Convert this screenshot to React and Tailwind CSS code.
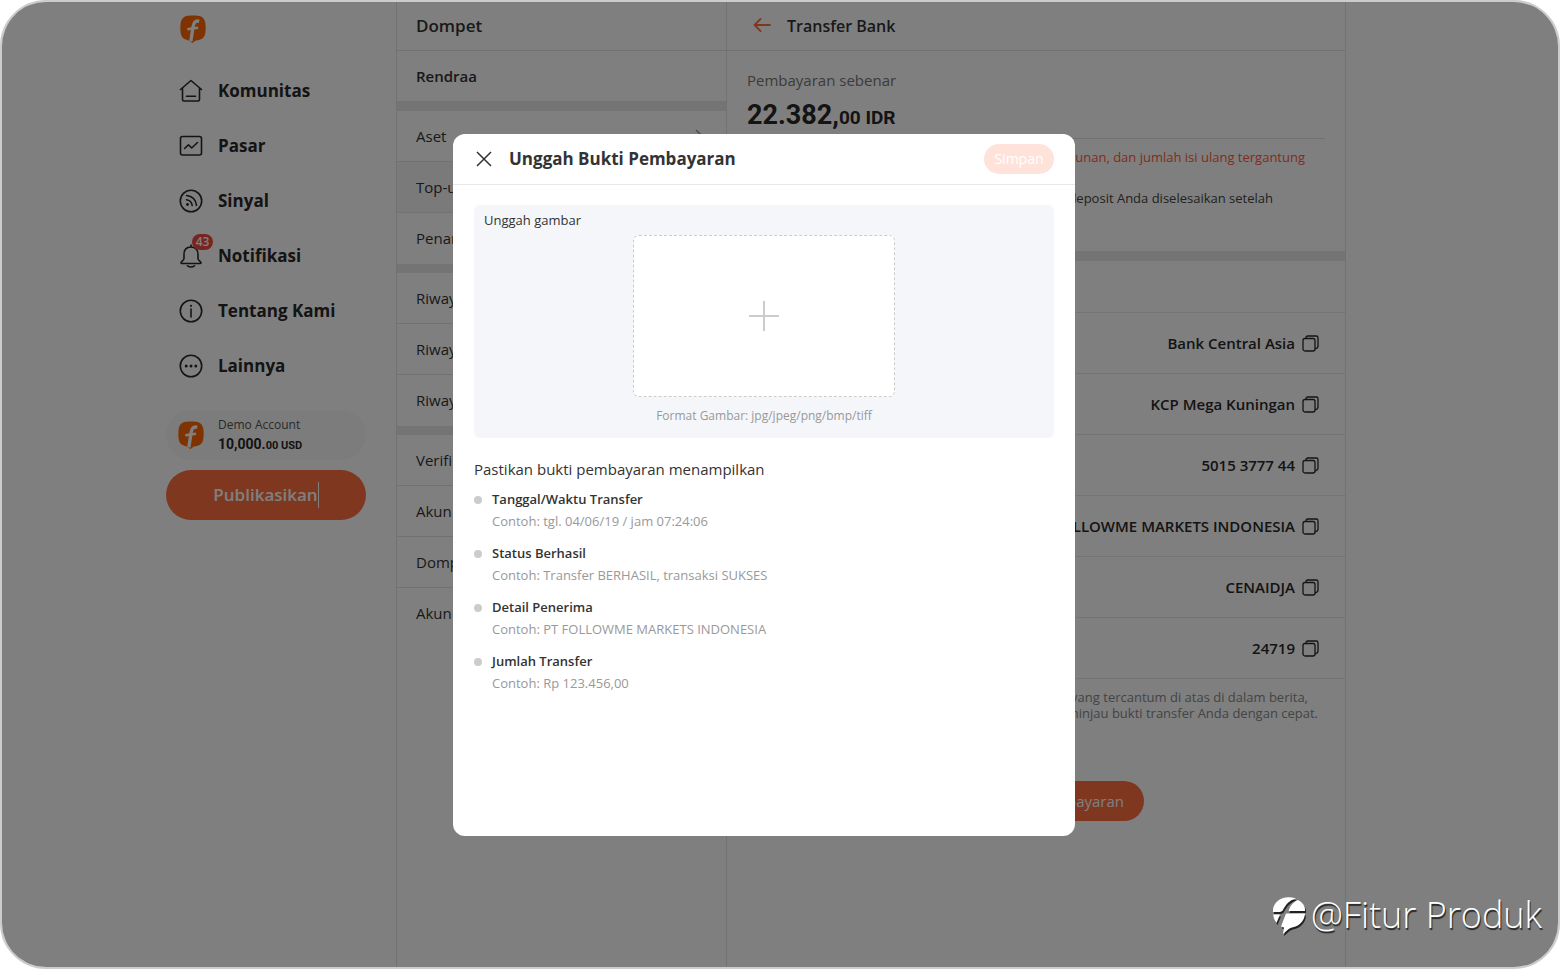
import React from "react";

const navItems = [
  { label: "Komunitas", icon: "home" },
  { label: "Pasar", icon: "market" },
  { label: "Sinyal", icon: "signal" },
  { label: "Notifikasi", icon: "bell", badge: 43 },
  { label: "Tentang Kami", icon: "info" },
  { label: "Lainnya", icon: "more" },
];

const walletGroups = [
  [{ label: "Aset", arrow: true }, { label: "Top-up", active: true }, { label: "Penarikan" }],
  [{ label: "Riwayat Aset" }, { label: "Riwayat Top-up" }, { label: "Riwayat Tarik" }],
  [{ label: "Verifikasi" }, { label: "Akun Bank" }, { label: "Dompet" }, { label: "Akun Saya" }],
];

const bankRows = [
  ["Nama Bank", "Bank Central Asia"],
  ["Cabang", "KCP Mega Kuningan"],
  ["Nomor Rekening", "5015 3777 44"],
  ["Nama Penerima", "PT FOLLOWME MARKETS INDONESIA"],
  ["Kode Swift", "CENAIDJA"],
  ["Berita", "24719"],
];

const proofItems = [
  ["Tanggal/Waktu Transfer", "Contoh: tgl. 04/06/19 / jam 07:24:06"],
  ["Status Berhasil", "Contoh: Transfer BERHASIL, transaksi SUKSES"],
  ["Detail Penerima", "Contoh: PT FOLLOWME MARKETS INDONESIA"],
  ["Jumlah Transfer", "Contoh: Rp 123.456,00"],
];

function Logo() {
  return (
    <svg className="h-7 w-[26px] shrink-0" viewBox="0 0 26 28" aria-hidden="true">
      <path
        d="M8 .8C10.500 .3 15.500 .3 18 .8C22.500 1.600 24.600 3.800 25.300 8C25.800 11 25.800 15 25.300 18C24.600 22.300 22.400 24.300 18 25.200L15.800 25.500L12.500 28L8 25.200C3.600 24.300 1.400 22.300 .7 18C.2 15 .2 11 .7 8C1.400 3.800 3.500 1.600 8 .8Z"
        fill="#ff6600"
      />
      <path d="M19.200 6.300C14.800 5.200 13.700 8 13 12L10.800 26.500" fill="none" stroke="#fff" strokeWidth="3.400" />
      <path d="M7.400 14.400C11 13.200 14.500 13.500 18 12.800" fill="none" stroke="#fff" strokeWidth="2.600" />
    </svg>
  );
}

function NavIcon({ name }) {
  const shapes = {
    home: (
      <>
        <path d="M1.500 10.500L12 1.500L22.500 10.500M3.500 9.500V20.500Q3.500 22 5 22H19Q20.500 22 20.500 20.500V9.500" />
        <path d="M7.500 17.300H16.500" />
      </>
    ),
    market: (
      <>
        <rect x="1.500" y="2.500" width="21" height="18.500" rx="2" />
        <path d="M5.500 14.500L9.500 10.800L12.700 14L18.500 8.500" />
      </>
    ),
    signal: (
      <>
        <circle cx="12" cy="12" r="10.700" />
        <path d="M7.500 6.500Q16.500 7.500 17.500 16.500M7.500 10.800Q12.500 11.500 13.200 16.500" />
        <circle cx="8.500" cy="15.500" r="1.400" fill="currentColor" stroke="none" />
      </>
    ),
    bell: (
      <path d="M12 1V3M12 3C7.500 3 5 6 5 10.500V14.500C5 16.500 2 17.500 2 18.700Q2 19.500 3 19.500H21Q22 19.500 22 18.700C22 17.500 19 16.500 19 14.500V10.500C19 6 16.500 3 12 3ZM8.500 21.800Q12 24.200 15.500 21.800" />
    ),
    info: (
      <>
        <circle cx="12" cy="12" r="10.700" />
        <path d="M12 10V18" />
        <circle cx="12" cy="6.800" r="1.100" fill="currentColor" stroke="none" />
      </>
    ),
    more: (
      <>
        <circle cx="12" cy="12" r="10.700" />
        <g fill="currentColor" stroke="none">
          <circle cx="7.200" cy="12" r="1.500" />
          <circle cx="12" cy="12" r="1.500" />
          <circle cx="16.800" cy="12" r="1.500" />
        </g>
      </>
    ),
  };
  return (
    <svg className="h-6 w-6" viewBox="0 0 24 24" fill="none" stroke="currentColor" strokeWidth="1.600" strokeLinecap="round" strokeLinejoin="round" aria-hidden="true">
      {shapes[name]}
    </svg>
  );
}

function CopyIcon() {
  return (
    <svg className="h-[17px] w-[17px]" viewBox="0 0 17 17" fill="none" stroke="currentColor" strokeWidth="1.300" strokeLinejoin="round" aria-hidden="true">
      <rect x="1" y="3.500" width="12" height="12.500" rx="2" />
      <path d="M4 3.500V2.800Q4 1 5.800 1H14.200Q16 1 16 2.800V11Q16 13.300 13 13.800" />
    </svg>
  );
}

function Sidebar() {
  return (
    <aside className="flex justify-end border-r border-[#e4e4e4] pr-[30px]">
      <div className="flex w-[200px] flex-col">
        <a href="#beranda" aria-label="Beranda" className="ml-3.5 mt-[13px]">
          <Logo />
        </a>
        <nav className="mt-5 flex flex-col">
          {navItems.map((item) => (
            <a key={item.label} href={"#" + item.icon} className="flex h-[55px] items-center gap-[15px] pl-[13px] text-[17px] font-bold text-[#282828]">
              <span className="relative">
                <NavIcon name={item.icon} />
                {item.badge && (
                  <span className="absolute -top-2.5 left-[13px] flex h-4 w-[21px] items-center justify-center rounded-full bg-[#f04a42] text-[12px] font-semibold text-white">
                    {item.badge}
                  </span>
                )}
              </span>
              {item.label}
            </a>
          ))}
        </nav>
        <div className="mt-[17px] flex h-[50px] items-center gap-[14px] rounded-full bg-[#f8f8f8] pl-3">
          <Logo />
          <div>
            <p className="text-[12px] leading-5 text-[#555]">Demo Account</p>
            <p className="font-[Roboto] text-sm font-bold leading-[19px] text-[#282828]">
              10,000.<span className="text-[11px]">00 USD</span>
            </p>
          </div>
        </div>
        <button type="button" className="mt-2.5 flex h-[50px] items-center justify-center rounded-full bg-[#ff6f3f] text-[17px] font-semibold text-white">
          <span className="border-r border-white">Publikasikan</span>
        </button>
      </div>
    </aside>
  );
}

function WalletMenu() {
  return (
    <section className="border-r border-[#e4e4e4] text-[15px] text-[#333]">
      <h2 className="flex h-[49px] items-center border-b border-[#e0e0e0] px-[19px] text-[17px] font-semibold">Dompet</h2>
      <p className="flex h-[50px] items-center px-[19px] font-semibold">Rendraa</p>
      {walletGroups.map((group, i) => (
        <ul key={i} className={i === 0 ? "border-t-[10px] border-[#e9e9e9]" : "border-t-[9px] border-[#e9e9e9]"}>
          {group.map((row) => (
            <li key={row.label} className={row.active ? "border-b border-[#e4e4e4] bg-[#f4f4f4]" : "border-b border-[#e4e4e4] last:border-transparent"}>
              <a href="#dompet" className="flex h-[50px] items-center justify-between px-[19px]">
                {row.label}
                {row.arrow && (
                  <svg className="h-3.5 w-3.5" viewBox="0 0 14 14" fill="none" stroke="#999" strokeWidth="1.500" aria-hidden="true">
                    <path d="M3 1L9 7L3 13" />
                  </svg>
                )}
              </a>
            </li>
          ))}
        </ul>
      ))}
    </section>
  );
}

function TransferPanel() {
  return (
    <main className="border-r border-[#e4e4e4] text-[#333]">
      <header className="flex h-[49px] items-center gap-[15px] border-b border-[#e0e0e0] px-[25px]">
        <button type="button" aria-label="Kembali">
          <svg className="h-5 w-5" viewBox="0 0 20 20" fill="none" stroke="#ff6f3f" strokeWidth="1.800" strokeLinecap="round" strokeLinejoin="round" aria-hidden="true">
            <path d="M18 9H2.500M8.500 3L2.500 9L8.500 15" />
          </svg>
        </button>
        <h1 className="text-base font-semibold">Transfer Bank</h1>
      </header>
      <div className="h-[200px] px-5 pt-[15px]">
        <p className="text-[15px] leading-7 text-[#777]">Pembayaran sebenar</p>
        <p className="border-b border-[#e0e0e0] pb-0.5 pt-[3px] font-[Roboto] text-[27px] font-bold leading-9 text-[#282828]">
          22.382,<span className="text-[19px]">00 IDR</span>
        </p>
        <div className="pt-2 text-right text-[13px] leading-5">
          <p className="pr-5 text-[#ff5a3c]">turunan, dan jumlah isi ulang tergantung</p>
          <p className="mt-[21px] pr-[52px] text-[#444]">deposit Anda diselesaikan setelah</p>
        </div>
      </div>
      <ul className="border-t-[10px] border-[#e9e9e9] pt-[51px] text-[15px]">
        {bankRows.map(([label, value]) => (
          <li key={label} className="flex h-[61px] items-center justify-end gap-[7px] border-t border-[#e9e9e9] pr-[26px] font-semibold text-[#282828]">
            {value}
            <button type="button" aria-label={"Salin " + label}>
              <CopyIcon />
            </button>
          </li>
        ))}
      </ul>
      <div className="border-t border-[#e9e9e9] px-[27px] pt-2.5 text-right text-[13px] leading-4 text-[#888]">
        <p className="pr-2.5">yang tercantum di atas di dalam berita,</p>
        <p>meninjau bukti transfer Anda dengan cepat.</p>
      </div>
      <button type="button" className="mx-auto mt-[60px] flex h-10 w-[216px] items-center justify-end rounded-full bg-[#ff6f3f] pr-5 text-[15px] text-white">
        Unggah Bukti Pembayaran
      </button>
    </main>
  );
}

function UploadDialog() {
  return (
    <section role="dialog" aria-modal="true" aria-labelledby="dialog-title" className="min-h-[702px] w-full max-w-[622px] rounded-xl bg-white text-[#333]">
      <header className="flex h-[51px] items-center border-b border-[#e8e8e8] pl-[23px] pr-[21px] pt-px">
        <button type="button" aria-label="Tutup">
          <svg className="h-4 w-4" viewBox="0 0 16 16" fill="none" stroke="#333" strokeWidth="1.500" aria-hidden="true">
            <path d="M1 1L15 15M15 1L1 15" />
          </svg>
        </button>
        <h2 id="dialog-title" className="ml-[17px] text-[17px] font-bold">Unggah Bukti Pembayaran</h2>
        <button type="button" disabled className="ml-auto h-[30px] w-[70px] rounded-full bg-[#ffe2d9] text-sm text-white">
          Simpan
        </button>
      </header>
      <div className="px-[21px] pt-5">
        <div className="flex h-[233px] flex-col items-center rounded-md bg-[#f4f6fa] px-2.5">
          <label htmlFor="proof" className="h-[30px] self-stretch text-[13px] leading-[30px]">Unggah gambar</label>
          <button id="proof" type="button" className="flex h-[162px] w-[262px] items-center justify-center rounded-md border border-dashed border-[#ccc] bg-white">
            <svg className="h-8 w-8" viewBox="0 0 32 32" stroke="#ccc" strokeWidth="2" aria-hidden="true">
              <path d="M16 1V31M1 16H31" />
            </svg>
          </button>
          <p className="pt-2.5 text-[12px] leading-[18px] text-[#999]">Format Gambar: jpg/jpeg/png/bmp/tiff</p>
        </div>
        <h3 className="mt-[19px] text-[15px] leading-6">Pastikan bukti pembayaran menampilkan</h3>
        <ul className="mt-[7px]">
          {proofItems.map(([title, example]) => (
            <li key={title} className="flex gap-2.5 pb-2.5">
              <span className="mt-2 h-2 w-2 rounded-full bg-[#ccc]" />
              <div className="text-[13px] leading-[22px]">
                <p className="font-semibold">{title}</p>
                <p className="text-[#999]">{example}</p>
              </div>
            </li>
          ))}
        </ul>
      </div>
    </section>
  );
}

function Watermark() {
  return (
    <div className="absolute bottom-8 right-4 flex items-center gap-1 text-white">
      <svg className="h-10 w-9 overflow-visible drop-shadow-[1px_2px_0px_#222]" viewBox="0 0 36 40" aria-hidden="true">
        <g fill="#fff">
          <path d="M25 3.500C12 -1 1 7 2 17H7C10 17 11 16.500 12 15C15 9 19 5 25 3.500Z" />
          <path d="M27 5C22 7 19 11 17.500 16H34C34.500 11 31.500 7.500 27 5Z" />
          <path d="M2.200 19.500H9L5.500 28C3.500 25.500 2.500 22.500 2.200 19.500Z" />
          <path d="M15 18.500L10 31.500C11 32 12 32.300 13 32.500L12 39C16 36 17 33.500 21 32.500C29 31 33.500 25.500 34 18.500Z" />
        </g>
      </svg>
      <span className="text-4xl font-light [text-shadow:1px_2px_1px_#222]">@Fitur Produk</span>
    </div>
  );
}

export default function App() {
  return (
    <div className="flex min-h-screen bg-white font-['Open_Sans',sans-serif]">
      <div className="relative grid w-full grid-cols-[minmax(230px,395fr)_330px_619px_minmax(0,212fr)] overflow-hidden rounded-[46px] border-2 border-[#ccc] bg-white">
        <Sidebar />
        <WalletMenu />
        <TransferPanel />
        <div className="absolute inset-0 flex items-center justify-center bg-black/50 pr-8">
          <UploadDialog />
        </div>
        <Watermark />
      </div>
    </div>
  );
}
